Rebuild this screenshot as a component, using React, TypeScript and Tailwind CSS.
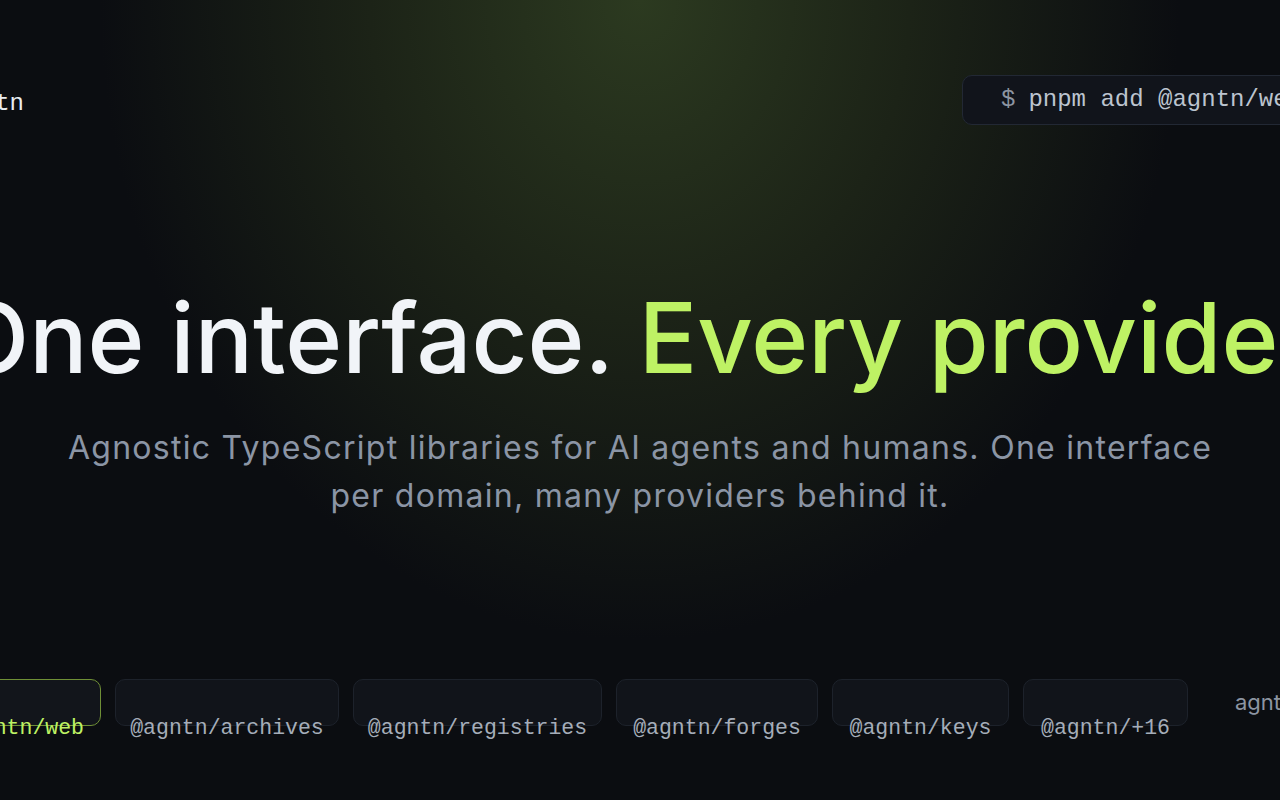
import React from 'react'

const packages = [
  { name: '@agntn/web', w: 'w-[163px]', active: true },
  { name: '@agntn/archives', w: 'w-[224px]' },
  { name: '@agntn/registries', w: 'w-[249px]' },
  { name: '@agntn/forges', w: 'w-[202px]' },
  { name: '@agntn/keys', w: 'w-[177px]' },
  { name: '@agntn/+16', w: 'w-[165px]' },
]

export default function App() {
  return (
    <div className="h-[800px] w-full overflow-hidden bg-[#0b0d11] bg-[radial-gradient(ellipse_540px_640px_at_50%_0%,#2c3a20_0%,#1c2317_50%,#0b0d11_100%)] font-['Inter',sans-serif] text-[#f1f4f8]">
      {/* Header */}
      <header className="-ml-[48px] flex w-[1380px] items-center justify-between pt-[75px]">
        <div className="mt-[8px] font-['Liberation_Mono',monospace] text-[24px] leading-none text-[#e8ecf1]">agntn</div>
        <div className="flex h-[50px] w-[370px] items-center rounded-[10px] border border-[#222834] bg-[#11141b] pl-[38px] font-['Liberation_Mono',monospace] text-[24px] text-[#bcc4cf]">
          <span className="text-[#8d95a2]">$</span>
          <span className="ml-[13px] whitespace-nowrap">pnpm add @agntn/web</span>
        </div>
      </header>

      {/* Hero */}
      <section className="flex flex-col items-center">
        <h1 className="ml-[14px] mt-[164px] whitespace-nowrap text-[97px] font-medium leading-none tracking-normal">
          One interface. <span className="text-[#bef264]">Every provider.</span>
        </h1>
        <p className="mt-[38px] w-[1170px] text-center text-[32px] leading-[48px] tracking-[0.04em] text-[#8b95a5]">
          Agnostic TypeScript libraries for AI agents and humans. One interface per domain, many providers behind it.
        </p>
      </section>

      {/* Packages */}
      <div className="-ml-[62px] mt-[159px] flex w-max items-center gap-[14px]">
        {packages.map((p) => (
          <div
            key={p.name}
            className={`flex h-[47px] shrink-0 flex-col items-center justify-end rounded-[10px] border ${p.w} ${
              p.active ? 'border-[#6f8f36] bg-[#12151b]' : 'border-[#1d222b] bg-[#11141a]'
            }`}
          >
            <span
              className={`-mb-[17px] whitespace-nowrap font-['Liberation_Mono',monospace] text-[21.5px] leading-[28px] ${
                p.active ? 'text-[#bef264]' : 'text-[#a5adb9]'
              }`}
            >
              {p.name}
            </span>
          </div>
        ))}
        <span className="ml-[33px] whitespace-nowrap text-[22px] text-[#8d95a2]">agntn</span>
      </div>
    </div>
  )
}
